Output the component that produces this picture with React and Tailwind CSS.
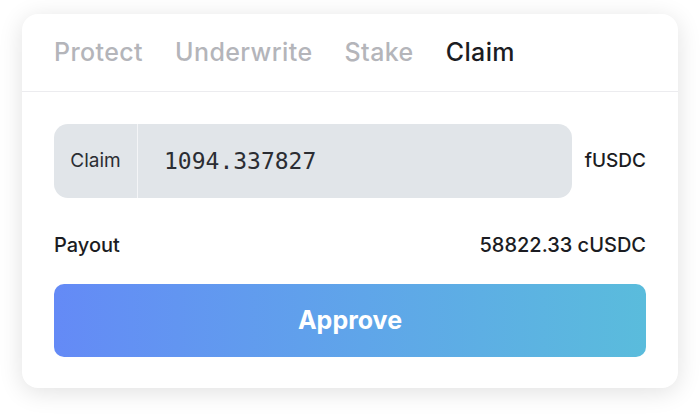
export default function App() {
  const tabs = ["Protect", "Underwrite", "Stake", "Claim"];
  const active = "Claim";

  return (
    <div className="w-[700px] h-[418px] bg-white pt-[14px] px-[22px] font-['Inter',sans-serif]">
      <div className="w-[656px] h-[374px] rounded-[16px] bg-white shadow-[0_4px_24px_rgba(0,0,0,0.12)]">
        {/* tabs */}
        <div className="flex gap-[32px] px-[32px] h-[78px] items-center border-b border-[#ececef]">
          {tabs.map((t) => (
            <span
              key={t}
              className={`text-[25px] font-medium tracking-[0.4px] ${
                t === active ? "text-[#1b1c22]" : "text-[#b4b5ba]"
              }`}
            >
              {t}
            </span>
          ))}
        </div>

        <div className="px-[32px] pt-[32px]">
          {/* input */}
          <div className="flex items-center">
            <div className="flex w-[518px] h-[74px] rounded-[14px] bg-[#e1e5e9] overflow-hidden">
              <div className="w-[84px] flex items-center justify-center border-r border-[#f4f5f7] text-[19px] text-[#2b2d33]">
                Claim
              </div>
              <div className="flex items-center pl-[26px] text-[23px] text-[#2b2d33] font-['DejaVu_Sans_Mono',monospace]">
                1094.337827
              </div>
            </div>
            <span className="ml-auto text-[19px] font-medium text-[#1b1c22]">fUSDC</span>
          </div>

          {/* payout */}
          <div className="flex justify-between items-center mt-[32px] text-[20px] font-medium text-[#1b1c22]">
            <span>Payout</span>
            <span>58822.33 cUSDC</span>
          </div>

          {/* button */}
          <button className="mt-[24px] w-full h-[73px] rounded-[10px] bg-gradient-to-r from-[#648af6] to-[#5abcdc] text-white text-[25px] font-bold">
            Approve
          </button>
        </div>
      </div>
    </div>
  );
}
